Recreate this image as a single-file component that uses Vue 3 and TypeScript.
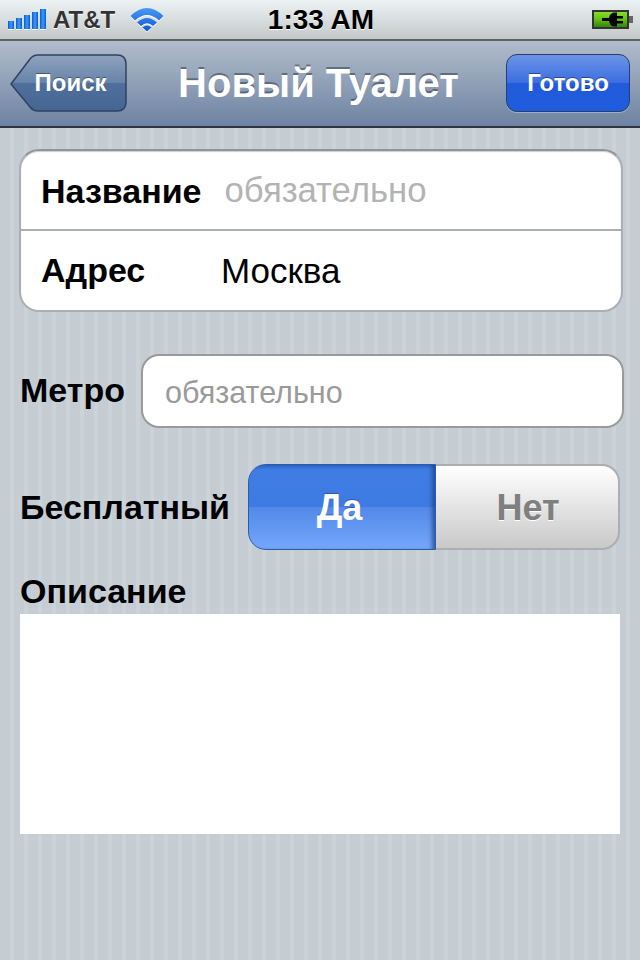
<script setup lang="ts">
const bars: number[] = [8, 11, 14, 17, 20]
</script>

<template>
  <div class="screen">
    <header class="status">
      <div class="status-left">
        <div class="signal">
          <span v-for="h in bars" :key="h" class="bar" :style="{ height: h + 'px' }"></span>
        </div>
        <span class="carrier">AT&amp;T</span>
        <svg class="wifi" width="34" height="26" viewBox="0 0 34 26">
          <defs>
            <linearGradient id="wf" gradientUnits="userSpaceOnUse" x1="0" y1="0" x2="0" y2="26">
              <stop offset="0" stop-color="#4f9ef5" />
              <stop offset="1" stop-color="#0a55d8" />
            </linearGradient>
          </defs>
          <path d="M0.5 10 Q17 -6 33.5 10 L29 14.5 Q17 3.5 5 14.5 Z" fill="url(#wf)" />
          <path d="M7 16.5 Q17 7.5 27 16.5 L23 20 Q17 14.5 11 20 Z" fill="url(#wf)" />
          <path d="M12.5 21.5 Q17 17.5 21.5 21.5 L17 25.5 Z" fill="url(#wf)" />
        </svg>
      </div>
      <div class="time">1:33 AM</div>
      <div class="status-right">
        <svg width="43" height="20" viewBox="0 0 43 20">
          <defs>
            <linearGradient id="bt" x1="0" y1="0" x2="0" y2="1">
              <stop offset="0" stop-color="#8fe02a" />
              <stop offset="0.45" stop-color="#66c414" />
              <stop offset="1" stop-color="#2d7f08" />
            </linearGradient>
          </defs>
          <rect x="2" y="1" width="35" height="17" fill="url(#bt)" stroke="#333" stroke-width="2" />
          <rect x="38" y="6" width="4" height="7" fill="#666" />
          <path d="M11 8 H18 Q19 2.5 24 2.5 H26 V6 H32 V8.5 H26 V11 H32 V13.5 H26 V16.5 H24 Q19 16.5 18 11 H11 Z" fill="#000" />
        </svg>
      </div>
    </header>

    <nav class="navbar">
      <button class="nav-btn back">
        <svg class="back-shape" width="118" height="60" viewBox="0 0 118 60">
          <defs>
            <linearGradient id="bk" x1="0" y1="0" x2="0" y2="1">
              <stop offset="0" stop-color="#8fa3bd" />
              <stop offset="0.5" stop-color="#6683a9" />
              <stop offset="0.5" stop-color="#4f6f9c" />
              <stop offset="1" stop-color="#456593" />
            </linearGradient>
          </defs>
          <path d="M1 30 L20 5 Q23 1 28 1 H107 Q116 1 116 10 V48 Q116 57 107 57 H28 Q23 57 20 53 Z" fill="url(#bk)" stroke="#2f4262" stroke-width="1.5" />
        </svg>
        <span class="btn-label">Поиск</span>
      </button>
      <h1 class="title">Новый Туалет</h1>
      <button class="nav-btn done"><span class="btn-label">Готово</span></button>
    </nav>

    <main class="content">
      <section class="group">
        <div class="row">
          <span class="row-label first">Название</span>
          <span class="row-placeholder">обязательно</span>
        </div>
        <div class="row second">
          <span class="row-label addr">Адрес</span>
          <span class="row-value">Москва</span>
        </div>
      </section>

      <div class="metro">
        <span class="label metro-label">Метро</span>
        <div class="input">обязательно</div>
      </div>

      <div class="free">
        <span class="label">Бесплатный</span>
        <div class="segment">
          <div class="seg yes">Да</div>
          <div class="seg no">Нет</div>
        </div>
      </div>

      <div class="label desc">Описание</div>
      <div class="textarea"></div>
    </main>
  </div>
</template>

<style>
html, body { margin: 0; padding: 0; }
</style>

<style scoped>
.screen {
  width: 640px;
  height: 960px;
  overflow: hidden;
  font-family: "Liberation Sans", Arial, sans-serif;
  background: repeating-linear-gradient(90deg, #c5ccd4 0, #c5ccd4 10px, #cbd2d8 10px, #cbd2d8 14px);
}
.status {
  box-sizing: border-box;
  height: 41px;
  display: grid;
  grid-template-columns: 1fr auto 1fr;
  align-items: center;
  padding: 0 6px 0 8px;
  background: linear-gradient(#edf2f4, #c3c8c9);
  border-bottom: 2px solid #5f6163;
}
.status-left { display: flex; align-items: center; }
.signal { display: flex; align-items: flex-end; gap: 2px; height: 20px; width: 38px; margin-bottom: 2px; }
.bar {
  width: 6px;
  background: linear-gradient(90deg, #0a58d8, #3a9cf8 50%, #0a58d8);
  box-shadow: 0 1px 0 #fff;
}
.carrier { font-size: 24px; font-weight: bold; color: #333; margin-left: 7px; text-shadow: 0 1px 0 #fff; }
.wifi { margin-left: 15px; margin-bottom: 1px; filter: drop-shadow(0 1px 0 #fff); }
.time { font-size: 28px; font-weight: bold; color: #000; text-shadow: 0 1px 0 #fff; }
.status-right { display: flex; justify-content: flex-end; padding-top: 1px; }
.navbar {
  box-sizing: border-box;
  height: 87px;
  display: flex;
  align-items: flex-start;
  justify-content: space-between;
  padding: 13px 10px 0 10px;
  background: linear-gradient(#b1bccb, #6d83a2);
  border-bottom: 2px solid #2d3642;
}
.nav-btn {
  position: relative;
  height: 58px;
  padding: 0;
  border: none;
  background: none;
  font-family: inherit;
}
.back { width: 117px; }
.back-shape { position: absolute; left: 0; top: 0; }
.done {
  width: 124px;
  border-radius: 11px;
  border: 1.5px solid #25406f;
  box-sizing: border-box;
  background: linear-gradient(#6c93e8 0, #3a6ee0 50%, #1f5bdc 50%, #205cdc 100%);
  box-shadow: 0 1px 0 rgba(255,255,255,0.3);
}
.btn-label {
  position: relative;
  font-size: 24px;
  font-weight: bold;
  color: #fff;
  text-shadow: 0 -1px 0 rgba(0,0,0,0.4);
}
.back .btn-label { left: 2px; }
.title {
  margin: 0 0 0 4px;
  font-size: 40px;
  font-weight: bold;
  line-height: 58px;
  color: #fff;
  text-shadow: 0 -2px 0 rgba(0,0,0,0.35);
}
.content { padding: 21px 20px 0 20px; }
.group {
  box-sizing: border-box;
  width: 604px;
  height: 163px;
  margin-left: -1px;
  background: #fff;
  border: 2px solid #abafb3;
  border-top-color: #8f9499;
  border-radius: 20px;
  overflow: hidden;
  box-shadow: inset 0 1px 1px rgba(0, 0, 0, 0.2);
}
.row {
  height: 78px;
  box-sizing: border-box;
  display: flex;
  align-items: center;
  padding-left: 20px;
}
.second { border-top: 2px solid #abafb3; height: 81px; }
.row-label { font-size: 34px; font-weight: bold; color: #000; }
.first { padding-top: 2px; }
.addr { width: 180px; }
.row-placeholder { font-size: 34.7px; color: #b3b3b3; margin-left: 23px; }
.row-value { font-size: 35px; color: #000; }
.metro { display: flex; align-items: center; margin-top: 42px; }
.label { font-size: 34px; font-weight: bold; color: #000; }
.metro-label { padding-bottom: 2px; }
.input {
  box-sizing: border-box;
  flex-shrink: 0;
  width: 483px;
  height: 74px;
  margin-left: 16px;
  display: flex;
  align-items: center;
  padding: 2px 0 0 22px;
  background: #fff;
  border: 2px solid #9a9a9a;
  border-radius: 18px;
  font-size: 30.5px;
  color: #9a9a9a;
}
.free { display: flex; align-items: center; margin-top: 36px; }
.segment {
  display: flex;
  flex-shrink: 0;
  width: 372px;
  height: 86px;
  margin-left: 18px;
}
.seg {
  box-sizing: border-box;
  display: flex;
  align-items: center;
  justify-content: center;
  padding-top: 2px;
  font-size: 36px;
  font-weight: bold;
}
.yes {
  width: 188px;
  padding-right: 5px;
  color: #fff;
  border-radius: 18px 0 0 18px;
  border: 1px solid #2a5cae;
  background: linear-gradient(#2f66c4 0, #3f7de5 6%, #3d7be3 50%, #5288e8 50%, #74a8fb 100%);
  box-shadow: inset -5px 0 4px -2px rgba(24, 60, 130, 0.7);
  text-shadow: 0 -1px 0 rgba(0,0,0,0.3);
}
.no {
  width: 184px;
  padding-left: 2px;
  color: #7f7f7f;
  border-radius: 0 18px 18px 0;
  border: 2px solid #acaeb0;
  border-left: none;
  background: linear-gradient(#fff, #c9c9c9);
  text-shadow: 0 1px 0 #fff;
}
.desc { margin-top: 21px; line-height: 40px; height: 43px; }
.textarea { width: 600px; height: 220px; background: #fff; }
</style>
